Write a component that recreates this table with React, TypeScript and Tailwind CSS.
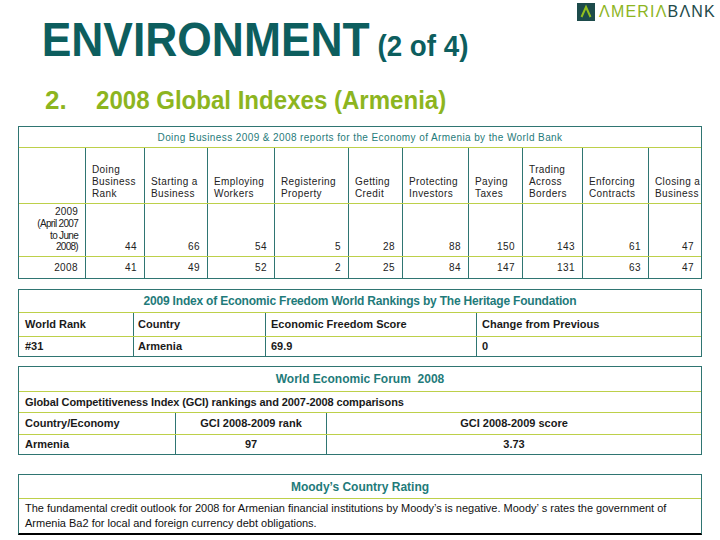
const teal = 'border-[#2f7572]';

const headers: string[][] = [
  [],
  ['Doing', 'Business', 'Rank'],
  ['Starting a', 'Business'],
  ['Employing', 'Workers'],
  ['Registering', 'Property'],
  ['Getting', 'Credit'],
  ['Protecting', 'Investors'],
  ['Paying', 'Taxes'],
  ['Trading', 'Across', 'Borders'],
  ['Enforcing', 'Contracts'],
  ['Closing a', 'Business'],
];

const widths = ['w-[67px]', 'w-[59px]', 'w-[63px]', 'w-[67px]', 'w-[74px]', 'w-[54px]', 'w-[66px]', 'w-[54px]', 'w-[60px]', 'w-[66px]', 'flex-1'];

const row2009 = ['44', '66', '54', '5', '28', '88', '150', '143', '61', '47'];
const row2008 = ['41', '49', '52', '2', '25', '84', '147', '131', '63', '47'];

function cellClass(i: number) {
  return `${widths[i]} ${i < 10 ? 'border-r border-[#2f7572]' : ''}`;
}

function DoingBusiness() {
  return (
    <div className={`mx-[18px] border ${teal} text-[10px] tracking-[0.4px] text-[#222]`}>
      <div className="h-[21px] border-b border-[#bdd04a] flex items-center justify-center text-[#1f7b7a]">
        Doing Business 2009 &amp; 2008 reports for the Economy of Armenia by the World Bank
      </div>
      <div className="h-[56px] flex border-b border-[#bdd04a]">
        {headers.map((lines, i) => (
          <div key={i} className={`${cellClass(i)} flex flex-col justify-end pl-[6px] pb-[3px] leading-[12px]`}>
            {lines.map((l) => (
              <span key={l}>{l}</span>
            ))}
          </div>
        ))}
      </div>
      <div className="h-[53px] flex border-b border-[#bdd04a]">
        <div className={`${cellClass(0)} flex flex-col justify-end items-end pr-[7px] pb-[3px] text-[10px] leading-[11.7px] tracking-[-0.7px]`}>
          <span className="tracking-[0.2px]">2009</span>
          <span>(April 2007</span>
          <span>to June</span>
          <span>2008)</span>
        </div>
        {row2009.map((v, i) => (
          <div key={i} className={`${cellClass(i + 1)} flex items-end justify-end pr-[7px] pb-[3px] leading-[12px]`}>
            {v}
          </div>
        ))}
      </div>
      <div className="h-[21px] flex">
        <div className={`${cellClass(0)} flex items-center justify-end pr-[7px]`}>2008</div>
        {row2008.map((v, i) => (
          <div key={i} className={`${cellClass(i + 1)} flex items-center justify-end pr-[7px]`}>
            {v}
          </div>
        ))}
      </div>
    </div>
  );
}

function Heritage() {
  return (
    <div className={`mx-[18px] border ${teal} text-[11px] font-bold text-[#1a1a1a]`}>
      <div className="h-[23px] border-b border-[#bdd04a] flex items-center justify-center text-[12px] text-[#1f7b7a] tracking-[-0.2px]">
        2009 Index of Economic Freedom World Rankings by The Heritage Foundation
      </div>
      <div className="h-[24px] flex border-b border-[#bdd04a]">
        <div className="w-[115px] border-r border-[#2f7572] flex items-center pl-[6px]">World Rank</div>
        <div className="w-[132px] border-r border-[#2f7572] flex items-center pl-[4px]">Country</div>
        <div className="w-[211px] border-r border-[#2f7572] flex items-center pl-[5px]">Economic Freedom Score</div>
        <div className="flex-1 flex items-center pl-[5px]">Change from Previous</div>
      </div>
      <div className="h-[19px] flex">
        <div className="w-[115px] border-r border-[#2f7572] flex items-center pl-[6px]">#31</div>
        <div className="w-[132px] border-r border-[#2f7572] flex items-center pl-[4px]">Armenia</div>
        <div className="w-[211px] border-r border-[#2f7572] flex items-center pl-[5px]">69.9</div>
        <div className="flex-1 flex items-center pl-[5px]">0</div>
      </div>
    </div>
  );
}

function Wef() {
  return (
    <div className={`mx-[18px] border ${teal} text-[11px] font-bold text-[#1a1a1a]`}>
      <div className="h-[25px] border-b border-[#bdd04a] flex items-center justify-center text-[12px] text-[#1f7b7a]">
        World Economic Forum&nbsp; 2008
      </div>
      <div className="h-[21px] border-b border-[#bdd04a] flex items-center pl-[6px] tracking-[-0.1px]">
        Global Competitiveness Index (GCI) rankings and 2007-2008 comparisons
      </div>
      <div className="h-[22px] flex border-b border-[#bdd04a]">
        <div className="w-[157px] border-r border-[#2f7572] flex items-center pl-[6px]">Country/Economy</div>
        <div className="w-[151px] border-r border-[#2f7572] flex items-center justify-center">GCI 2008-2009 rank</div>
        <div className="flex-1 flex items-center justify-center">GCI 2008-2009 score</div>
      </div>
      <div className="h-[19px] flex">
        <div className="w-[157px] border-r border-[#2f7572] flex items-center pl-[6px]">Armenia</div>
        <div className="w-[151px] border-r border-[#2f7572] flex items-center justify-center">97</div>
        <div className="flex-1 flex items-center justify-center">3.73</div>
      </div>
    </div>
  );
}

function Moodys() {
  return (
    <div className={`mx-[18px] border-x border-t ${teal} border-b-[2px] border-b-black text-[11px] text-[#111]`}>
      <div className="h-[24px] border-b border-[#bdd04a] flex items-center justify-center text-[12px] font-bold text-[#1f7b7a]">
        Moody’s Country Rating
      </div>
      <div className="h-[34px] pl-[6px] pt-[2px] leading-[15px] whitespace-nowrap">
        The fundamental credit outlook for 2008 for Armenian financial institutions by Moody’s is negative. Moody’ s rates the government of
        <br />
        Armenia Ba2 for local and foreign currency debt obligations.
      </div>
    </div>
  );
}

function Logo() {
  return (
    <div className="flex items-center gap-[4px] mr-[4px]">
      <svg width="18" height="18" viewBox="0 0 18 18">
        <rect width="18" height="18" fill="#1d4b4b" />
        <path d="M4.5 14 L9 4 L13.5 14" fill="none" stroke="#93c01f" strokeWidth="2" />
      </svg>
      <span className="text-[16px] tracking-[1.2px] leading-none">
        <span className="text-[#8db51f]">ΛMERIΛ</span>
        <span className="text-[#234a4a]">BΛNK</span>
      </span>
    </div>
  );
}

export default function App() {
  return (
    <div className="w-[720px] h-[540px] bg-white overflow-hidden font-['Liberation_Sans',Arial,sans-serif]">
      <div className="h-[64px] flex justify-between items-start pt-[3px]">
        <div className="pl-[45px] pt-[13px] h-[61px] leading-[48px] origin-left scale-x-[0.925] whitespace-nowrap font-bold text-[#0d5e5e]">
          <span className="text-[48px]">ENVIRONMENT</span>
          <span className="text-[30px]"> (2 of 4)</span>
        </div>
        <Logo />
      </div>
      <div className="h-[26px] flex pl-[45px] mt-[23px] font-bold text-[26px] leading-[26px] text-[#8db51f]">
        <span className="w-[51px]">2.</span>
        <span className="origin-left scale-x-[0.925] whitespace-nowrap">2008 Global Indexes (Armenia)</span>
      </div>
      <div className="mt-[13px]">
        <DoingBusiness />
      </div>
      <div className="mt-[10px]">
        <Heritage />
      </div>
      <div className="mt-[9px]">
        <Wef />
      </div>
      <div className="mt-[19px]">
        <Moodys />
      </div>
    </div>
  );
}
